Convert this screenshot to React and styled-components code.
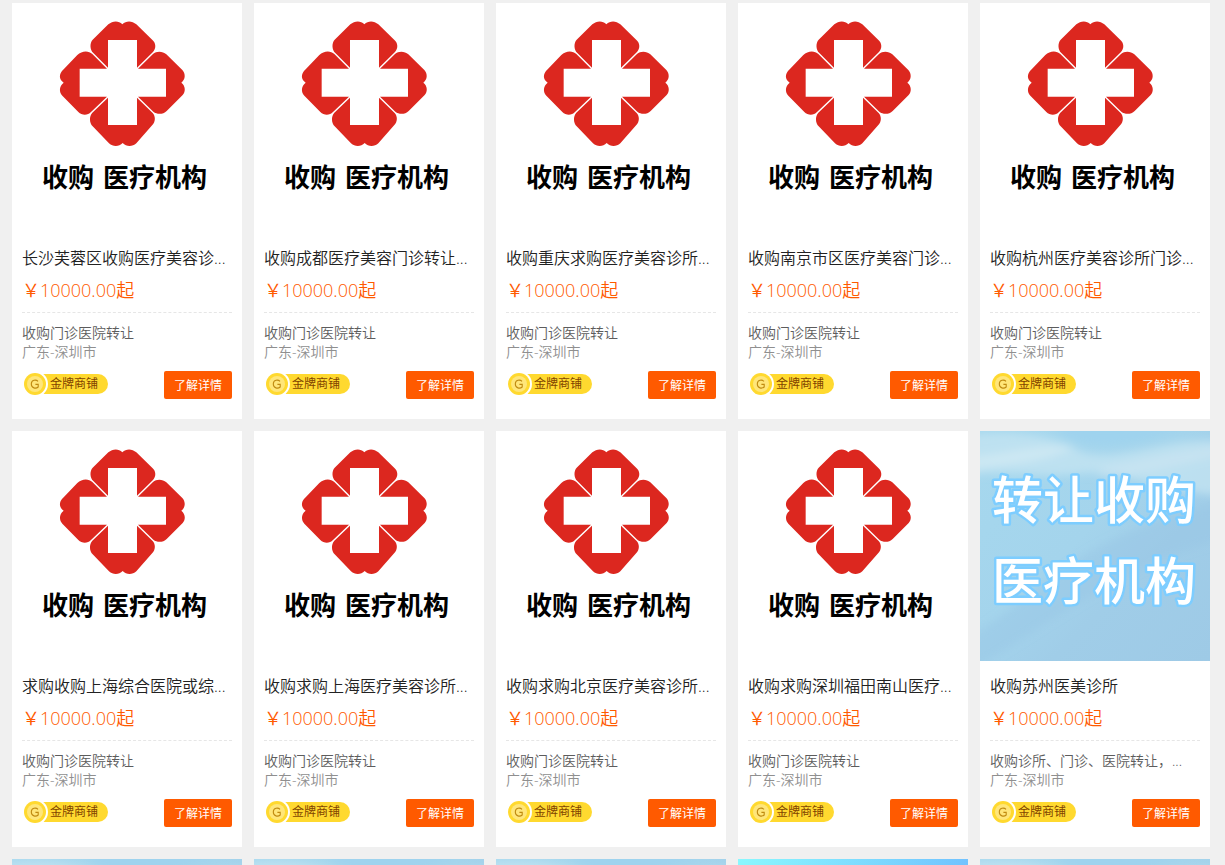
import React from 'react';
import styled, { createGlobalStyle } from 'styled-components';

const GlobalStyle = createGlobalStyle`
  * { box-sizing: border-box; }
  html { scrollbar-width: none; }
  body {
    margin: 0;
    background: #f0f0f0;
    font-family: "Open Sans", "Noto Sans CJK SC", sans-serif;
    font-size: 14px;
    color: #333;
  }
`;

const Page = styled.main`
  height: 100vh;
  overflow: hidden;
  padding: 3px 15px 0 12px;
`;

const Grid = styled.div`
  display: grid;
  grid-template-columns: repeat(5, minmax(0, 1fr));
  gap: 12px;
`;

const Card = styled.article`
  background: #fff;
`;

const Art = styled.svg`
  display: block;
  width: 100%;
  aspect-ratio: 1;
`;

const GradientCover = styled.div`
  aspect-ratio: 1;
  background: linear-gradient(100deg, #8af8fe, #6fbcff 96%);
`;

const Body = styled.div`
  padding: 12px 10px 20px;
  font-weight: 350;
`;

const Title = styled.h3`
  margin: 0;
  font-size: 16px;
  font-weight: inherit;
  line-height: 26px;
  white-space: nowrap;
  overflow: hidden;

  a {
    color: #222;
    text-decoration: none;
  }
`;

const Price = styled.p`
  margin: 4px 0 0;
  padding-bottom: 7px;
  border-bottom: 1px dashed #e6e6e6;
  font-size: 18px;
  line-height: 30px;
  color: #ff5a00;
  white-space: nowrap;
`;

const Summary = styled.p`
  margin: 10px 0 0;
  line-height: 20px;
  color: #5c5c5c;
  white-space: nowrap;
  overflow: hidden;
`;

const Place = styled.p`
  margin: 0;
  line-height: 18px;
  color: #8f8f8f;
`;

const Footer = styled.div`
  display: flex;
  align-items: center;
  justify-content: space-between;
  margin-top: 10px;
  font-weight: 400;
`;

const Badge = styled.span`
  display: flex;
  align-items: center;
  height: 20px;
  margin-left: 2px;
  margin-bottom: 2px;
  padding-right: 10px;
  border-radius: 10px;
  background: #ffd92f;
  font-size: 12px;
  line-height: 20px;
  color: #7f4300;
`;

const Coin = styled.svg`
  flex: none;
  width: 26px;
  height: 26px;
  margin-left: -2px;
  margin-right: 2px;
`;

const DetailButton = styled.button`
  height: 28px;
  padding: 2px 10px 0;
  border: 0;
  border-radius: 2px;
  background: #ff5a00;
  color: #fff;
  font-family: inherit;
  font-size: 12px;
  line-height: 26px;
  cursor: pointer;
`;

function CrossArt() {
  return (
    <Art viewBox="0 0 230 230" role="img" aria-label="收购 医疗机构">
      <rect width="230" height="230" fill="#fff" />
      <g transform="scale(0.33333) translate(-36 -9)" fill="#dc271f">
        <path d="M324 203 L280 159 C269 149 269 128 278 119 L325 73 C338 62 356 61 367 73 C379 61 396 62 409 73 L458 121 C468 130 469 146 459 156 L411 203 V120 H324 Z" />
        <path d="M414 206 L459 162 C470 152 488 153 499 163 L547 210 C557 221 557 238 544 248 C557 258 557 275 548 285 L500 333 C489 344 471 344 460 335 L414 290 H498 V206 Z" />
        <path d="M411 293 L458 339 C467 349 467 365 457 375 L409 430 C397 441 379 441 368 429 C357 441 339 441 327 430 L278 379 C268 368 267 349 277 338 L324 293 V375 H411 Z" />
        <path d="M321 290 L273 336 C263 347 246 347 235 336 L187 287 C177 276 177 259 191 248 C177 238 177 224 186 213 L232 165 C245 152 266 151 277 162 L321 206 H239 V290 Z" />
      </g>
      <text
        x="30"
        y="184"
        fontFamily='"Noto Sans CJK SC", sans-serif'
        fontSize="26"
        fontWeight="700"
        fill="#000"
      >
        收购
        <tspan x="91">医疗机构</tspan>
      </text>
    </Art>
  );
}

function SkyArt({ id, lettered }) {
  return (
    <Art viewBox="0 0 230 230" role="img" aria-label="医疗机构">
      <defs>
        <linearGradient id={`${id}-sky`} x1="0" y1="0" x2="1" y2="1">
          <stop offset="0" stopColor="#a6d8ee" />
          <stop offset="0.45" stopColor="#a4d4ec" />
          <stop offset="0.65" stopColor="#a0cde8" />
          <stop offset="1" stopColor="#9ecae6" />
        </linearGradient>
        <filter id={`${id}-soft`} x="-20%" y="-20%" width="140%" height="140%">
          <feGaussianBlur stdDeviation="4" />
        </filter>
      </defs>
      <rect width="230" height="230" fill={`url(#${id}-sky)`} />
      <g filter={`url(#${id}-soft)`}>
        <path d="M-10 4 C30 -2 75 4 100 20 C135 34 190 4 240 10 V64 C190 62 150 42 105 42 C60 48 30 38 -10 44 Z" fill="#c6e4f1" opacity="0.75" />
        <path d="M-10 26 C30 22 60 12 95 16 C70 30 30 34 -10 38 Z" fill="#dcf0f5" opacity="0.5" />
        <path d="M120 38 C160 30 200 20 240 16 V24 C200 34 160 44 120 46 Z" fill="#d4e8f3" opacity="0.4" />
        <path d="M70 -8 C90 20 150 20 215 -8 Z" fill="#9fd3ee" />
        <path d="M-10 205 C60 165 95 105 240 72 V110 C150 130 90 180 -10 240 Z" fill="#96c3e4" opacity="0.4" />
      </g>
      {lettered && (
        <g
          fontFamily='"Noto Sans CJK SC", sans-serif'
          fontSize="51"
          fontWeight="500"
          fill="#fff"
          stroke="#7dcdff"
          strokeWidth="5"
          strokeLinejoin="round"
          paintOrder="stroke"
        >
          <text x="12" y="88">转让收购</text>
          <text x="12" y="169">医疗机构</text>
        </g>
      )}
    </Art>
  );
}

function GoldBadge() {
  return (
    <Badge>
      <Coin viewBox="0 0 26 26" aria-hidden="true">
        <path d="M0 0 H13 A13 13 0 0 1 13 26 H0 Z" fill="#fff" />
        <circle cx="13" cy="13" r="11" fill="#ffd92f" />
        <circle cx="13" cy="13" r="8" fill="#ffe67a" />
        <path d="M16 10.4 C14.2 8.4 9.3 8.7 9.3 13 C9.3 17.4 14 17.9 16.2 16 V13.4 H13.4" fill="none" stroke="#c08a10" strokeWidth="1.1" />
      </Coin>
      金牌商铺
    </Badge>
  );
}

function Listing({ title, summary = '收购门诊医院转让', sky }) {
  return (
    <Card>
      {sky ? <SkyArt id="suzhou" lettered /> : <CrossArt />}
      <Body>
        <Title><a href="#detail">{title}</a></Title>
        <Price>￥10000.00起</Price>
        <Summary>{summary}</Summary>
        <Place>广东-深圳市</Place>
        <Footer>
          <GoldBadge />
          <DetailButton type="button">了解详情</DetailButton>
        </Footer>
      </Body>
    </Card>
  );
}

const listings = [
  { title: '长沙芙蓉区收购医疗美容诊...' },
  { title: '收购成都医疗美容门诊转让...' },
  { title: '收购重庆求购医疗美容诊所...' },
  { title: '收购南京市区医疗美容门诊...' },
  { title: '收购杭州医疗美容诊所门诊...' },
  { title: '求购收购上海综合医院或综...' },
  { title: '收购求购上海医疗美容诊所...' },
  { title: '收购求购北京医疗美容诊所...' },
  { title: '收购求购深圳福田南山医疗...' },
  { title: '收购苏州医美诊所', summary: '收购诊所、门诊、医院转让，...', sky: true },
];

const nextCovers = ['sky', 'sky', 'sky', 'gradient', 'sky'];

export default function App() {
  return (
    <>
      <GlobalStyle />
      <Page>
        <Grid>
          {listings.map((item) => (
            <Listing key={item.title} {...item} />
          ))}
          {nextCovers.map((kind, i) => (
            <Card key={i}>
              {kind === 'sky' ? <SkyArt id={`next-${i}`} /> : <GradientCover />}
            </Card>
          ))}
        </Grid>
      </Page>
    </>
  );
}
